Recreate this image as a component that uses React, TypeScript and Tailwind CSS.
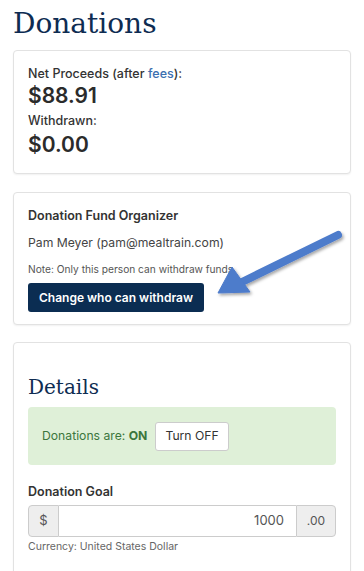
import React from "react";

const sans = { fontFamily: "Inter, 'Noto Sans', sans-serif" };
const serif = { fontFamily: "'DejaVu Serif', 'Liberation Serif', serif" };

function Card({ children, className = "" }: { children: React.ReactNode; className?: string }) {
  return (
    <div
      className={
        "rounded-[4px] border border-[#e2e2e2] bg-white px-[14px] shadow-[0_1px_2px_rgba(0,0,0,0.06)] " +
        className
      }
    >
      {children}
    </div>
  );
}

function Arrow() {
  return (
    <svg
      className="pointer-events-none absolute left-[200px] top-[220px]"
      width="160"
      height="90"
      viewBox="0 0 160 90"
    >
      <defs>
        <filter id="sh" x="-20%" y="-20%" width="140%" height="140%">
          <feDropShadow dx="1.5" dy="2" stdDeviation="1.5" floodColor="#000" floodOpacity="0.35" />
        </filter>
      </defs>
      <g filter="url(#sh)" fill="#4d7bcb" stroke="#4d7bcb">
        <line x1="138" y1="15" x2="42" y2="62" strokeWidth="8" strokeLinecap="round" />
        <polygon points="18,73 32,47 50,72" strokeWidth="1" strokeLinejoin="round" />
      </g>
    </svg>
  );
}

export default function App() {
  return (
    <div className="relative min-h-[571px] bg-white px-[13px] pb-6 text-[#333]" style={sans}>
      <h1 className="pt-[4px] text-[28px] leading-[40px] text-[#0e2c52]" style={serif}>
        Donations
      </h1>

      <Card className="mt-[6px] pt-[14px] pb-[15px]">
        <div className="text-[12.5px] font-medium leading-[18px]">
          Net Proceeds (after <span className="text-[#3b6fb0]">fees</span>):
        </div>
        <div className="text-[21px] font-semibold leading-[26px] text-[#2b2b2b]">$88.91</div>
        <div className="mt-[3px] text-[12.5px] font-medium leading-[18px]">Withdrawn:</div>
        <div className="mt-[2px] text-[21px] font-semibold leading-[26px] text-[#2b2b2b]">$0.00</div>
      </Card>

      <Card className="mt-[18px] pt-[14px] pb-[12px]">
        <div className="text-[12.5px] font-semibold leading-[18px]">Donation Fund Organizer</div>
        <div className="mt-[9px] text-[12.2px] leading-[18px] text-[#444]">
          Pam Meyer (pam@mealtrain.com)
        </div>
        <div className="mt-[10px] text-[10.2px] leading-[14px] text-[#555]">
          Note: Only this person can withdraw funds
        </div>
        <button className="mt-[7px] h-[29px] w-[176px] rounded-[3px] bg-[#0b2d52] text-[12px] font-semibold text-white">
          Change who can withdraw
        </button>
      </Card>

      <Card className="mt-[17px] pt-[29px] pb-[10px]">
        <h2 className="text-[20px] leading-[30px] text-[#0e2c52]" style={serif}>
          Details
        </h2>
        <div className="mt-[5px] flex h-[58px] items-center gap-[8px] rounded-[4px] bg-[#dff0d8] px-[14px]">
          <span className="text-[12.2px] text-[#3c763d]">
            Donations are: <span className="font-bold">ON</span>
          </span>
          <button className="h-[29px] rounded-[3px] border border-[#ccc] bg-white px-[9px] text-[12.2px] text-[#333]">
            Turn OFF
          </button>
        </div>
        <div className="mt-[18px] text-[12.5px] font-semibold leading-[18px]">Donation Goal</div>
        <div className="mt-[4px] flex h-[32px]">
          <div className="flex w-[31px] items-center justify-center rounded-l-[4px] border border-[#ccc] bg-[#eee] text-[13px] text-[#555]">
            $
          </div>
          <div className="flex flex-1 items-center justify-end border-y border-[#ccc] bg-white px-[12px] text-[13px] text-[#555]">
            1000
          </div>
          <div className="flex w-[40px] items-center justify-center rounded-r-[4px] border border-[#ccc] bg-[#eee] text-[12px] text-[#555]">
            .00
          </div>
        </div>
        <div className="mt-[3px] text-[10.5px] leading-[14px] text-[#666]">
          Currency: United States Dollar
        </div>
        <button aria-label="Save" className="mt-[18px] block h-[36px] w-full rounded-[3px] bg-[#0b2d52]" />
      </Card>

      <Arrow />
    </div>
  );
}
